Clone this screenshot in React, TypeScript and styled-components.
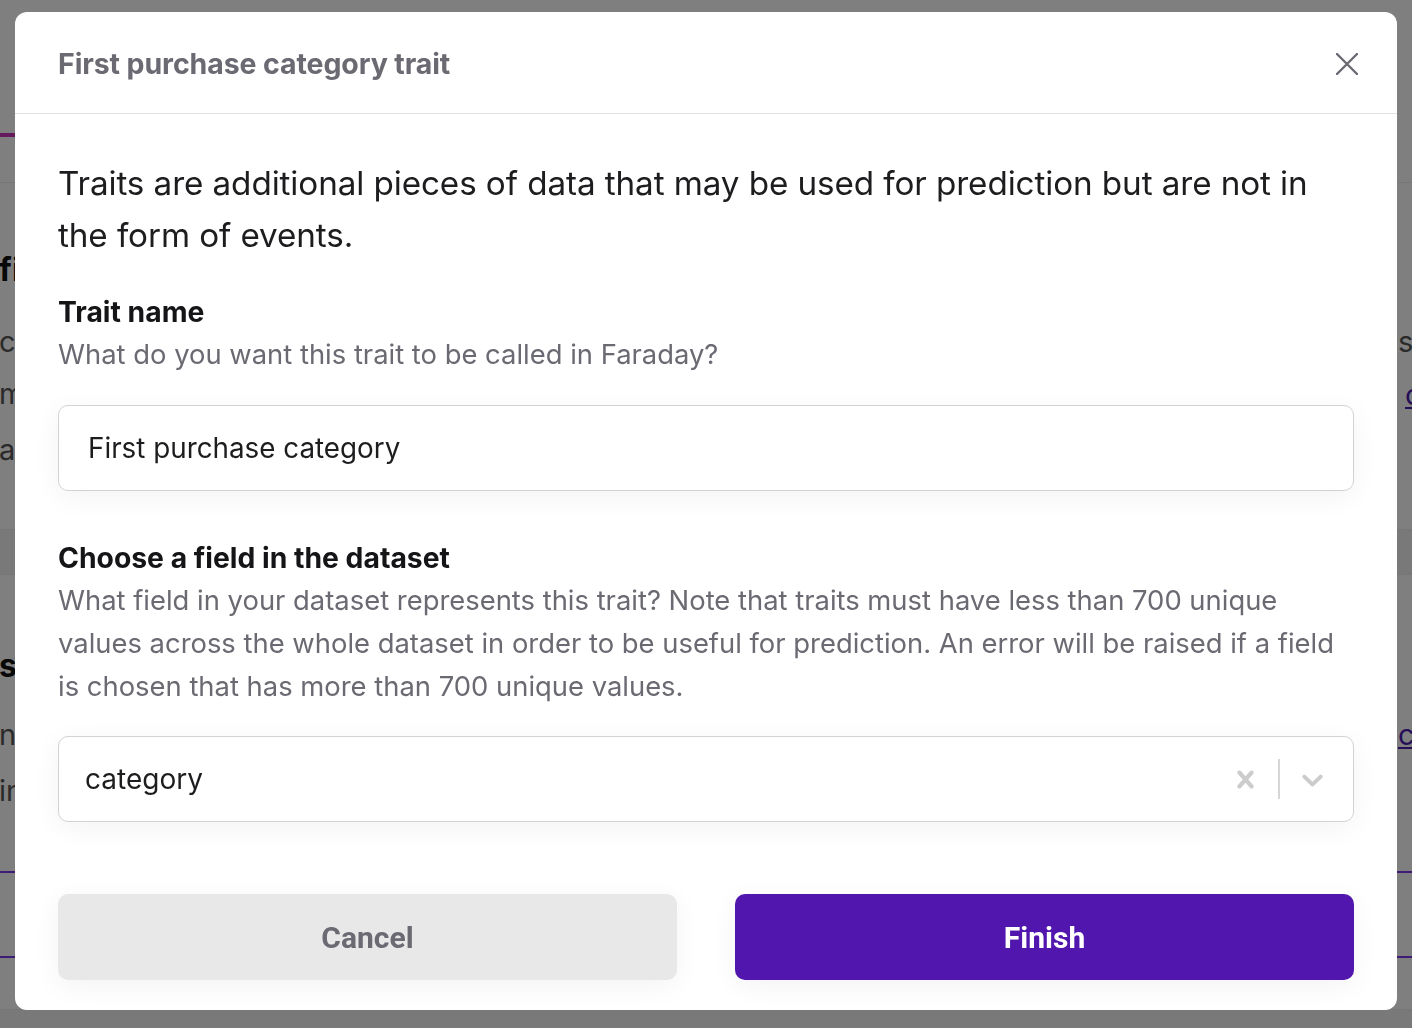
import React from 'react';
import styled, { createGlobalStyle } from 'styled-components';

const GlobalStyle = createGlobalStyle`
  html, body {
    margin: 0;
    padding: 0;
    background: #ffffff;
    font-family: Inter, 'Noto Sans', sans-serif;
  }
  * {
    box-sizing: border-box;
  }
`;

const CloseIcon = () => (
  <svg width="22" height="22" viewBox="0 0 22 22" fill="none">
    <path d="M1 1L21 21M21 1L1 21" stroke="#6b6a72" strokeWidth="2.4" strokeLinecap="round" />
  </svg>
);

const CrossIcon = () => (
  <svg width="35" height="35" viewBox="0 0 20 20" fill="#cccccc">
    <path d="M14.348 14.849c-0.469 0.469-1.229 0.469-1.697 0l-2.651-3.030-2.651 3.029c-0.469 0.469-1.229 0.469-1.697 0-0.469-0.469-0.469-1.229 0-1.697l2.758-3.15-2.759-3.152c-0.469-0.469-0.469-1.228 0-1.697s1.228-0.469 1.697 0l2.652 3.031 2.651-3.031c0.469-0.469 1.228-0.469 1.697 0s0.469 1.229 0 1.697l-2.758 3.152 2.758 3.15c0.469 0.469 0.469 1.229 0 1.698z" />
  </svg>
);

const ChevronIcon = () => (
  <svg width="35" height="35" viewBox="0 0 20 20" fill="#cccccc">
    <path d="M4.516 7.548c0.436-0.446 1.043-0.481 1.576 0l3.908 3.747 3.908-3.747c0.533-0.481 1.141-0.446 1.574 0 0.436 0.445 0.408 1.197 0 1.615-0.406 0.418-4.695 4.502-4.695 4.502-0.217 0.223-0.502 0.335-0.787 0.335s-0.57-0.112-0.789-0.335c0 0-4.287-4.084-4.695-4.502s-0.436-1.17 0-1.615z" />
  </svg>
);

export default function App() {
  return (
    <>
      <GlobalStyle />
      <Page>
        <Band height={133} />
        <Band height={4}>
          <TabMark />
        </Band>
        <Band height={46} border />
        <Section height={347}>
          <Peek top={89}>
            <SectionTitle>first purchase</SectionTitle>
          </Peek>
          <Peek top={161}>
            <PeekText>category of the first order</PeekText>
          </Peek>
          <Peek top={213}>
            <PeekText>mapped from the dataset</PeekText>
          </Peek>
          <Peek top={269}>
            <PeekText>and values</PeekText>
          </Peek>
          <Peek top={161} right>
            <PeekText>s</PeekText>
          </Peek>
          <Peek top={214} right link>
            <PeekLink>c</PeekLink>
          </Peek>
        </Section>
        <Band height={45} tint border />
        <Section height={435}>
          <Peek top={93}>
            <SectionTitle>summary</SectionTitle>
          </Peek>
          <Peek top={162}>
            <PeekText>name</PeekText>
          </Peek>
          <Peek top={218}>
            <PeekText>in the dataset</PeekText>
          </Peek>
          <Peek top={162} right>
            <PeekLink>c</PeekLink>
          </Peek>
          <RowRule top={296} />
          <RowRule top={381} />
        </Section>
        <Band height={18} tint />
      </Page>

      <Overlay>
        <Modal>
          <Header>
            <Title>First purchase category trait</Title>
            <CloseButton aria-label="Close">
              <CloseIcon />
            </CloseButton>
          </Header>
          <Body>
            <Intro>
              Traits are additional pieces of data that may be used for prediction but are not in the form of events.
            </Intro>

            <FieldLabel>Trait name</FieldLabel>
            <Hint>What do you want this trait to be called in Faraday?</Hint>
            <TextInput defaultValue="First purchase category" />

            <FieldLabel spaced>Choose a field in the dataset</FieldLabel>
            <Hint>
              What field in your dataset represents this trait? Note that traits must have less than 700 unique
              values across the whole dataset in order to be useful for prediction. An error will be raised if a field
              is chosen that has more than 700 unique values.
            </Hint>
            <Select>
              <SelectValue>category</SelectValue>
              <Indicators>
                <Indicator>
                  <CrossIcon />
                </Indicator>
                <IndicatorSeparator />
                <Indicator>
                  <ChevronIcon />
                </Indicator>
              </Indicators>
            </Select>

            <Actions>
              <Button>Cancel</Button>
              <Button primary>Finish</Button>
            </Actions>
          </Body>
        </Modal>
      </Overlay>
    </>
  );
}

const Page = styled.div`
  display: flex;
  flex-direction: column;
  width: 100%;
  min-height: 100vh;
  overflow: hidden;
`;

const Band = styled.div<{ height: number; tint?: boolean; border?: boolean }>`
  position: relative;
  height: ${(p) => p.height}px;
  background: ${(p) => (p.tint ? '#f3f3f3' : '#ffffff')};
  border-bottom: ${(p) => (p.border ? '1px solid #ececec' : 'none')};
`;

const TabMark = styled.div`
  width: 160px;
  height: 4px;
  background: #c935b8;
`;

const Section = styled.div<{ height: number }>`
  position: relative;
  height: ${(p) => p.height}px;
  background: #ffffff;
  border-bottom: 1px solid #ececec;
`;

const Peek = styled.div<{ top: number; right?: boolean; link?: boolean }>`
  position: absolute;
  top: ${(p) => p.top}px;
  left: ${(p) => (p.right ? (p.link ? 1405 : 1398) : -1)}px;
  white-space: nowrap;
  line-height: 36px;
  transform: translateY(-50%);
`;

const SectionTitle = styled.span`
  font-size: 32px;
  font-weight: 700;
  color: #111111;
`;

const PeekText = styled.span`
  font-size: 29px;
  color: #555555;
`;

const PeekLink = styled.span`
  font-size: 29px;
  color: #4c1bb0;
  text-decoration: underline;
`;

const RowRule = styled.div<{ top: number }>`
  position: absolute;
  left: 0;
  right: 0;
  top: ${(p) => p.top}px;
  height: 2px;
  background: #7a38f0;
`;

const Overlay = styled.div`
  position: fixed;
  inset: 0;
  background: rgba(0, 0, 0, 0.5);
  padding: 12px 15px 0;
`;

const Modal = styled.div`
  background: #ffffff;
  border-radius: 12px;
  overflow: hidden;
`;

const Header = styled.div`
  display: flex;
  align-items: center;
  justify-content: space-between;
  height: 102px;
  padding: 2px 39px 0 43px;
  border-bottom: 1px solid #e2e2e4;
`;

const Title = styled.h2`
  margin: 0;
  font-size: 28.5px;
  font-weight: 700;
  color: #6b6a72;
  letter-spacing: -0.1px;
`;

const CloseButton = styled.button`
  display: flex;
  padding: 0;
  border: none;
  background: none;
  cursor: pointer;
`;

const Body = styled.div`
  display: flex;
  flex-direction: column;
  padding: 43px 43px 30px;
`;

const Intro = styled.p`
  margin: 0;
  font-size: 33.25px;
  line-height: 52px;
  color: #1d1d20;
  letter-spacing: -0.1px;
`;

const FieldLabel = styled.div<{ spaced?: boolean }>`
  margin-top: ${(p) => (p.spaced ? 47 : 31)}px;
  font-size: 28.3px;
  line-height: 40px;
  font-weight: 700;
  color: #151518;
`;

const Hint = styled.div`
  margin-top: 1px;
  font-size: 27.4px;
  line-height: 43px;
  color: #6b6a72;
`;

const TextInput = styled.input`
  margin-top: 29px;
  height: 86px;
  width: 100%;
  padding: 0 29px;
  border: 1px solid #d3d3d6;
  border-radius: 10px;
  font-family: Inter, 'Noto Sans', sans-serif;
  font-size: 27.8px;
  color: #1d1d20;
  background: #ffffff;
  box-shadow: 0 6px 28px rgba(0, 0, 0, 0.05);
  outline: none;
`;

const Select = styled.div`
  margin-top: 28px;
  display: flex;
  align-items: center;
  height: 86px;
  padding: 0 8px 0 26px;
  border: 1px solid #d3d3d6;
  border-radius: 10px;
  background: #ffffff;
  box-shadow: 0 6px 28px rgba(0, 0, 0, 0.05);
`;

const SelectValue = styled.div`
  flex: 1;
  font-size: 28px;
  color: #1d1d20;
`;

const Indicators = styled.div`
  display: flex;
  align-items: center;
  align-self: stretch;
`;

const Indicator = styled.div`
  display: flex;
  align-items: center;
  padding: 0 15px;
`;

const IndicatorSeparator = styled.span`
  width: 2px;
  height: 40px;
  background: #d6d6d6;
`;

const Actions = styled.div`
  margin-top: 72px;
  display: grid;
  grid-template-columns: 1fr 1fr;
  gap: 58px;
`;

const Button = styled.button<{ primary?: boolean }>`
  height: 86px;
  border: none;
  border-radius: 10px;
  font-family: Roboto, 'Liberation Sans', sans-serif;
  font-size: 30px;
  font-weight: 700;
  cursor: pointer;
  color: ${(p) => (p.primary ? '#ffffff' : '#6b6a72')};
  background: ${(p) => (p.primary ? '#5016ad' : '#e8e8e9')};
  box-shadow: 0 6px 28px rgba(0, 0, 0, 0.05);
`;
